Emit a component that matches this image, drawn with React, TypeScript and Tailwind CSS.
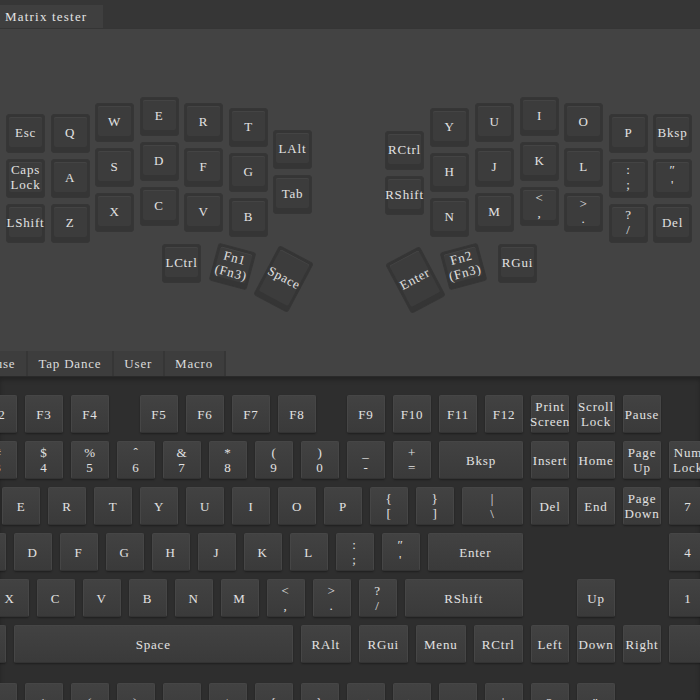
import React from 'react'

type SplitK = { l: string; x: number; y: number; w?: number; h?: number; r?: number }

const leftCols = [6, 50.5, 95, 139.5, 184, 229, 273]
const leftTops = [113, 113, 102, 96, 102, 107, 129]
const leftLabels = [
  ['Esc', 'Caps\nLock', 'LShift'],
  ['Q', 'A', 'Z'],
  ['W', 'S', 'X'],
  ['E', 'D', 'C'],
  ['R', 'F', 'V'],
  ['T', 'G', 'B'],
  ['LAlt', 'Tab'],
]
const rightCols = [385, 430, 475, 520, 564, 609, 653]
const rightTops = [130, 107, 102, 96, 102, 113, 113]
const rightLabels = [
  ['RCtrl', 'RShift'],
  ['Y', 'H', 'N'],
  ['U', 'J', 'M'],
  ['I', 'K', '<\n,'],
  ['O', 'L', '>\n.'],
  ['P', ':\n;', '?\n/'],
  ['Bksp', '″\n\'', 'Del'],
]

function buildSplit(): SplitK[] {
  const keys: SplitK[] = []
  leftLabels.forEach((col, c) =>
    col.forEach((l, r) => keys.push({ l, x: leftCols[c], y: leftTops[c] + r * 45 }))
  )
  rightLabels.forEach((col, c) =>
    col.forEach((l, r) => keys.push({ l, x: rightCols[c], y: rightTops[c] + r * 45 }))
  )
  // thumb cluster
  keys.push({ l: 'LCtrl', x: 162, y: 243 })
  keys.push({ l: 'Fn1\n(Fn3)', x: 213, y: 246, r: 15 })
  keys.push({ l: 'Space', x: 263.5, y: 250, h: 56, r: 28 })
  keys.push({ l: 'Enter', x: 396, y: 251, h: 56, r: -28 })
  keys.push({ l: 'Fn2\n(Fn3)', x: 444, y: 246, r: -15 })
  keys.push({ l: 'RGui', x: 498, y: 243 })
  return keys
}

const splitKeys = buildSplit()

function SplitKey({ k }: { k: SplitK }) {
  return (
    <div
      className="absolute rounded-[3px] border border-[#363636] bg-[#353535] p-[2px] pb-[5px]"
      style={{
        left: k.x,
        top: k.y - 28,
        width: k.w ?? 39,
        height: k.h ?? 39,
        transform: k.r ? `rotate(${k.r}deg)` : undefined,
      }}
    >
      <div className="flex h-full w-full items-center justify-center whitespace-pre-line rounded-[2px] bg-[#3c3c3c] text-center text-[13px] leading-[15px] tracking-[0.8px] text-[#e2e2e2] shadow-[inset_0_1px_0_#444]">
        {k.l}
      </div>
    </div>
  )
}

// widths for 1u = 46px pitch, 8px gap
const W: Record<string, string> = {
  '1': 'w-[38px]',
  '1.25': 'w-[49.5px]',
  '1.5': 'w-[61px]',
  '1.75': 'w-[72.5px]',
  '2': 'w-[84px]',
  '2.25': 'w-[95.5px]',
  '2.75': 'w-[118.5px]',
  '6.25': 'w-[279.5px]',
}
const SP: Record<string, string> = {
  '0.5': 'w-[15px]',
  '1': 'w-[38px]',
  '3': 'w-[130px]',
}

type Item = [string, string?] | { sp: string }

const rows: Item[][] = [
  [
    ['Esc'], { sp: '1' }, ['F1'], ['F2'], ['F3'], ['F4'], { sp: '0.5' },
    ['F5'], ['F6'], ['F7'], ['F8'], { sp: '0.5' },
    ['F9'], ['F10'], ['F11'], ['F12'], ['Print\nScreen'], ['Scroll\nLock'], ['Pause'],
  ],
  [
    ['~\n`'], ['!\n1'], ['@\n2'], ['#\n3'], ['$\n4'], ['%\n5'], ['ˆ\n6'], ['&\n7'], ['*\n8'],
    ['(\n9'], [')\n0'], ['_\n-'], ['+\n='], ['Bksp', '2'],
    ['Insert'], ['Home'], ['Page\nUp'], ['Num\nLock'], ['/'], ['*'], ['-'],
  ],
  [
    ['Tab', '1.5'], ['Q'], ['W'], ['E'], ['R'], ['T'], ['Y'], ['U'], ['I'], ['O'], ['P'],
    ['{\n['], ['}\n]'], ['|\n\\', '1.5'], ['Del'], ['End'], ['Page\nDown'], ['7'], ['8'], ['9'], ['+'],
  ],
  [
    ['Caps\nLock', '1.75'], ['A'], ['S'], ['D'], ['F'], ['G'], ['H'], ['J'], ['K'], ['L'],
    [':\n;'], ['″\n\''], ['Enter', '2.25'], { sp: '3' }, ['4'], ['5'], ['6'],
  ],
  [
    ['LShift', '2.25'], ['Z'], ['X'], ['C'], ['V'], ['B'], ['N'], ['M'], ['<\n,'], ['>\n.'], ['?\n/'],
    ['RShift', '2.75'], { sp: '1' }, ['Up'], { sp: '1' }, ['1'], ['2'], ['3'], ['Enter'],
  ],
  [
    ['LCtrl', '1.25'], ['LGui', '1.25'], ['LAlt', '1.25'], ['Space', '6.25'], ['RAlt', '1.25'],
    ['RGui', '1.25'], ['Menu', '1.25'], ['RCtrl', '1.25'], ['Left'], ['Down'], ['Right'], ['0', '2'], ['.'],
  ],
]

const shifted = ['&', '*', '(', ')', '_', '+', '{', '}', '<', '>', ':', '|', '?', '″']

function Key({ label, w = '1' }: { label: string; w?: string }) {
  return (
    <div
      className={`${W[w]} flex h-[38px] shrink-0 items-center justify-center whitespace-pre-line rounded-[2px] border border-[#464646] border-b-[#333] bg-gradient-to-b from-[#424242] to-[#3a3a3a] text-center text-[13px] leading-[15px] tracking-[0.8px] text-[#e2e2e2] shadow-[0_1px_2px_rgba(0,0,0,0.35)]`}
    >
      {label}
    </div>
  )
}

function Tab({ label, extra = '' }: { label: string; extra?: string }) {
  return (
    <div
      className={`flex h-[25px] shrink-0 items-center border-r-2 border-[#363636] bg-[#3d3d3d] pl-[10px] pr-[11px] text-[13px] tracking-[0.8px] text-[#dcdcdc] ${extra}`}
    >
      {label}
    </div>
  )
}

export default function App() {
  return (
    <div className="h-[700px] w-[700px] overflow-hidden bg-[#2e2e2e] font-['Liberation_Serif',serif]">
      {/* top tab strip */}
      <div className="flex h-[28px] bg-[#363636]">
        <div className="mt-[5px] flex h-[23px] w-[103px] items-center bg-[#3f3f3f] px-[5px] text-[13px] tracking-[1.2px] text-[#e4e4e4]">
          Matrix tester
        </div>
      </div>

      {/* matrix tester panel */}
      <div className="relative h-[322px] border-t border-[#353535] bg-[#434343]">
        {splitKeys.map((k, i) => (
          <SplitKey key={i} k={k} />
        ))}
      </div>

      {/* keycode category tabs */}
      <div className="flex h-[26px] items-start bg-[#434343] pt-[1px]">
        <Tab label="Mouse" extra="-ml-[34px]" />
        <Tab label="Tap Dance" />
        <Tab label="User" />
        <Tab label="Macro" />
      </div>

      {/* keycode keyboard */}
      <div className="border-t border-[#2a2a2a] bg-[#2e2e2e] pt-[18px] shadow-[inset_0_3px_4px_rgba(0,0,0,0.25)]">
        <div className="-ml-[159px] flex flex-col gap-2">
          {rows.map((row, ri) => (
            <div key={ri} className="flex gap-2">
              {row.map((it, i) =>
                Array.isArray(it) ? (
                  <Key key={i} label={it[0]} w={it[1]} />
                ) : (
                  <div key={i} className={`${SP[it.sp]} h-[38px] shrink-0`} />
                )
              )}
            </div>
          ))}
        </div>
        <div className="-ml-[21.5px] mt-[20px] flex gap-2">
          {shifted.map((s, i) => (
            <Key key={i} label={s} />
          ))}
        </div>
      </div>
    </div>
  )
}
